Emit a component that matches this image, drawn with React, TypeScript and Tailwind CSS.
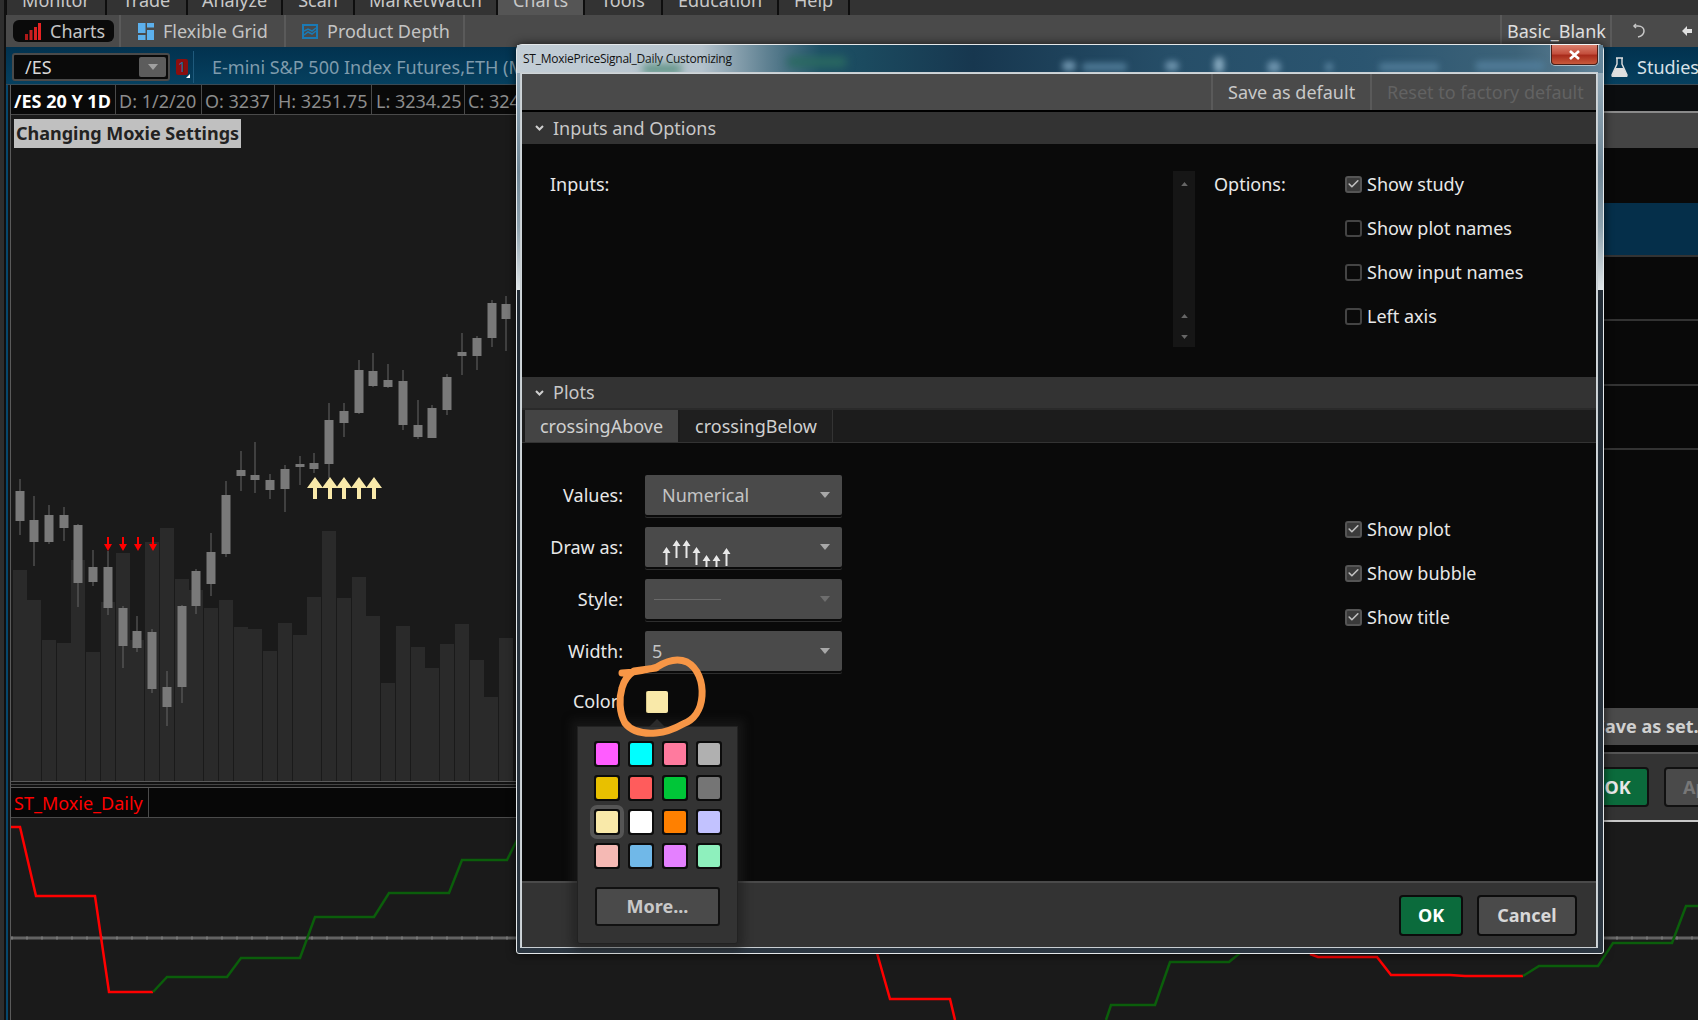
import { Check } from 'lucide-react';

const FONT = "font-['Noto_Sans',sans-serif]";

const topTabs = [
  { label: 'Monitor', cls: 'w-[98px]' },
  { label: 'Trade', cls: 'w-[79px]' },
  { label: 'Analyze', cls: 'w-[93px]' },
  { label: 'Scan', cls: 'w-[70px]' },
  { label: 'MarketWatch', cls: 'w-[141px]' },
  { label: 'Charts', cls: 'w-[85px] bg-[#555555]' },
  { label: 'Tools', cls: 'w-[76px]' },
  { label: 'Education', cls: 'w-[114px]' },
  { label: 'Help', cls: 'w-[69px]' },
];

const infoCells = [
  { label: '/ES 20 Y 1D', cls: 'w-[105px] pl-[3px] font-bold text-white' },
  { label: 'D: 1/2/20', cls: 'w-[86px] pl-[3px]' },
  { label: 'O: 3237', cls: 'w-[73px] pl-[3px]' },
  { label: 'H: 3251.75', cls: 'w-[97px] pl-[3px]' },
  { label: 'L: 3234.25', cls: 'w-[93px] pl-[4px]' },
  { label: 'C: 3248', cls: 'w-[80px] pl-[3px]' },
];

// x center, wick top, body top, body bottom, wick bottom
const candles = [
  [20, 479, 491, 521, 535], [34, 496, 520, 542, 566], [49, 505, 515, 542, 544], [64, 507, 515, 528, 541],
  [78, 524, 525, 583, 607], [93, 550, 567, 582, 586], [108, 551, 567, 608, 615], [123, 606, 608, 646, 668],
  [137, 616, 631, 648, 652], [152, 629, 632, 689, 693], [167, 671, 687, 707, 726], [182, 605, 606, 687, 703],
  [196, 569, 571, 606, 614], [211, 533, 552, 584, 596], [226, 481, 495, 554, 557], [241, 451, 470, 476, 491],
  [255, 442, 475, 480, 493], [270, 474, 480, 490, 499], [285, 465, 469, 489, 512], [300, 456, 464, 467, 485],
  [314, 453, 463, 469, 473], [329, 403, 420, 464, 478], [344, 403, 411, 423, 437], [359, 360, 370, 413, 414],
  [373, 353, 371, 386, 387], [388, 364, 380, 387, 388], [403, 370, 381, 425, 430], [418, 400, 425, 437, 439],
  [432, 405, 408, 438, 438], [447, 374, 377, 410, 415], [462, 333, 352, 356, 375], [477, 336, 338, 356, 370],
  [492, 300, 303, 338, 347], [506, 296, 304, 319, 351],
];

// left edge, top
const volumes = [
  [13, 570], [27, 600], [42, 640], [57, 643], [71, 560], [86, 652], [101, 602], [116, 553], [130, 640],
  [145, 542], [160, 528], [175, 579], [189, 590], [204, 608], [219, 600], [234, 627], [248, 629], [263, 651],
  [278, 623], [293, 635], [307, 597], [322, 531], [337, 598], [352, 577], [366, 616], [381, 683], [396, 626],
  [411, 647], [425, 668], [440, 644], [455, 624], [470, 660], [484, 697], [499, 638],
];

const swatches = [
  ['bg-[#ff5cff]', 'bg-[#00ffff]', 'bg-[#ff7a9e]', 'bg-[#b0b0b0]'],
  ['bg-[#e8c000]', 'bg-[#ff5c5c]', 'bg-[#00c638]', 'bg-[#757575]'],
  ['bg-[#f9e9a9]', 'bg-[#ffffff]', 'bg-[#ff8000]', 'bg-[#c2c2ff]'],
  ['bg-[#f5b9b4]', 'bg-[#70b8e8]', 'bg-[#e480ff]', 'bg-[#8ef0bd]'],
];

function Caret({ up = false, small = false, cls = 'fill-[#9a9a9a]' }: { up?: boolean; small?: boolean; cls?: string }) {
  return (
    <svg width={small ? 7 : 10} height={small ? 4 : 6} viewBox="0 0 10 6" className={cls}>
      <path d={up ? 'M0 6 L5 0 L10 6 Z' : 'M0 0 L10 0 L5 6 Z'} />
    </svg>
  );
}

function Chevron() {
  return (
    <svg width="9" height="6" viewBox="0 0 9 6" className="stroke-[#cfcfcf] fill-none" strokeWidth="2">
      <path d="M1 1 L4.5 4.5 L8 1" />
    </svg>
  );
}

function ChartPanel() {
  return (
    <div className="relative h-[666px] shrink-0 overflow-hidden">
      <div className="absolute left-[3px] top-[4px] h-[29px] px-[2px] flex items-center bg-[#c0c0c0] text-[#222222] font-bold text-[18px] whitespace-nowrap z-10">
        Changing Moxie Settings
      </div>
      <svg width="1687" height="666" viewBox="11 115 1687 666" className="block">
        {volumes.map(([x, top]) => (
          <rect key={x} x={x} y={top} width="14" height={781 - top} fill="#2a2a2a" />
        ))}
        {candles.map(([x, wt, bt, bb, wb]) => (
          <g key={x}>
            <rect x={x - 0.5} y={wt} width="1" height={wb - wt} fill="#666666" />
            <rect x={x - 4.5} y={bt} width="9" height={Math.max(bb - bt, 2)} fill="#797979" />
          </g>
        ))}
        {[108, 123, 138, 153].map((x) => (
          <path key={x} d={`M${x - 1} 537 h2 v7 h3 l-4 7 l-4 -7 h3 z`} fill="#ff0000" />
        ))}
        {[315, 330, 344, 359, 374].map((x) => (
          <path key={x} d={`M${x} 477 l8 11 h-6 v11 h-4 v-11 h-6 z`} fill="#f9e9a9" />
        ))}
      </svg>
    </div>
  );
}

function StudyPanel() {
  return (
    <div className="relative h-[202px] shrink-0 overflow-hidden">
      <svg width="1687" height="202" viewBox="11 818 1687 202" className="block">
        <line x1="11" y1="938" x2="1698" y2="938" stroke="#626262" strokeWidth="3" />
        <line x1="11" y1="938" x2="1698" y2="938" stroke="#757575" strokeWidth="3" strokeDasharray="2 13" />
        <polyline fill="none" stroke="#ff0000" strokeWidth="2.5" points="11,827 20,827 36,896 95,896 109,992 153,992" />
        <polyline fill="none" stroke="#0b5e0b" strokeWidth="2.5" points="153,992 167,977 227,977 241,958 300,958 315,917 374,917 389,893 449,893 462,860 507,860 517,840" />
        <polyline fill="none" stroke="#ff0000" strokeWidth="2.5" points="877,953 890,999 950,999 955,1020" />
        <polyline fill="none" stroke="#0b5e0b" strokeWidth="2.5" points="1106,1020 1111,1005 1155,1005 1170,962 1229,962 1240,953" />
        <polyline fill="none" stroke="#ff0000" strokeWidth="2.5" points="1310,954 1318,957 1377,957 1391,975 1450,975 1465,976 1523,976" />
        <polyline fill="none" stroke="#0b5e0b" strokeWidth="2.5" points="1523,976 1539,966 1598,966 1613,943 1672,943 1686,906 1698,906" />
      </svg>
    </div>
  );
}

function StudiesWindow() {
  return (
    <div className="absolute left-[1560px] top-[85px] w-[138px] h-[737px] flex flex-col bg-[#090909] text-[18px]">
      <div className="h-[26px] shrink-0 bg-[#0b0d0f]" />
      <div className="h-[2px] shrink-0 bg-[#8a8a8a]" />
      <div className="h-[35px] shrink-0 bg-[#444444]" />
      <div className="h-[55px] shrink-0" />
      <div className="h-[54px] shrink-0 bg-[#052f4a] border-b-2 border-[#333333]" />
      <div className="h-[64px] shrink-0 border-b-2 border-[#333333]" />
      <div className="h-[65px] shrink-0 border-b-2 border-[#333333]" />
      <div className="h-[64px] shrink-0 border-b-2 border-[#333333]" />
      <div className="h-[258px] shrink-0" />
      <div className="h-[37px] shrink-0 bg-[#4a4a4a] pl-[35px] flex items-center font-bold text-[#d0d0d0] whitespace-nowrap">
        Save as set...
      </div>
      <div className="h-[7px] shrink-0" />
      <div className="flex-1 bg-[#333333] border-t-2 border-[#555555] border-b-2 border-b-[#c8c8c8] flex items-center pl-[26px] gap-[15px]">
        <div className="w-[63px] h-[40px] shrink-0 bg-[#0b6b3c] border-2 border-[#111111] rounded-[4px] flex items-center justify-center font-bold text-[#e8e8e8]">OK</div>
        <div className="w-[60px] h-[40px] shrink-0 bg-[#4a4a4a] border-2 border-[#111111] rounded-[4px] pl-[17px] flex items-center font-bold text-[#777777] whitespace-nowrap overflow-hidden">Apply</div>
      </div>
    </div>
  );
}

function CheckRow({ label, checked = false }: { label: string; checked?: boolean }) {
  return (
    <div className="h-[24px] flex items-center gap-[5px] text-[18px] text-[#e8e8e8] whitespace-nowrap">
      <span className={`w-[17px] h-[17px] rounded-[3px] border-2 flex items-center justify-center ${checked ? 'border-[#555555] bg-[#3a3a3a]' : 'border-[#444444]'}`}>
        {checked && <Check size={14} strokeWidth={3} className="text-[#c0c0c0]" />}
      </span>
      {label}
    </div>
  );
}

function Select({ label, children, dim = false }: { label: string; children?: React.ReactNode; dim?: boolean }) {
  return (
    <div className="flex h-[40px] mb-[12px]">
      <div className="w-[101px] text-right text-[18px] text-[#e8e8e8] leading-[40px]">{label}</div>
      <div className="ml-[22px] w-[197px] h-[40px] bg-[#4a4a4a] rounded-[2px] flex items-center overflow-hidden pr-[12px] shadow-[0_2px_0_#0a0a0a,0_3px_0_#2e2e2e] text-[18px] text-[#c4c4c4]">
        <div className="flex-1 min-w-0 h-full flex items-center">{children}</div>
        <Caret cls={dim ? 'fill-[#6e6e6e]' : 'fill-[#a8a8a8]'} />
      </div>
    </div>
  );
}

function DrawAsArrows() {
  const tips = [20, 13, 13, 20, 28, 28, 21];
  return (
    <svg width="75" height="40" viewBox="0 0 75 40" className="ml-[15px] fill-[#e8e8e8]">
      {tips.map((t, i) => (
        <path key={i} d={`M${6.5 + i * 10} ${t} l4 6 h-3 v12 h-2 v-12 h-3 z`} />
      ))}
    </svg>
  );
}

function ColorPopup() {
  return (
    <div className="absolute left-[60px] top-[681px] w-[161px] h-[218px] bg-[#333333] border border-[#222222] rounded-b-[3px] shadow-[0_0_8px_6px_rgba(30,30,30,0.6)] pt-[14px] px-[16px]">
      <svg width="16" height="9" viewBox="0 0 16 9" className="absolute left-[71px] -top-[9px] fill-[#2a2a2a]">
        <path d="M0 9 L8 1 L16 9 Z" />
      </svg>
      <div className="grid grid-cols-4 gap-x-[8px] gap-y-[8px] w-[128px]">
        {swatches.flat().map((c, i) => (
          <div key={i} className={`w-[26px] h-[26px] rounded-[3px] flex items-center justify-center bg-[#0c0c0c] ${i === 8 ? 'outline-[4px] outline-[#555555]' : ''}`}>
            <div className={`w-[22px] h-[22px] rounded-[2px] ${c}`} />
          </div>
        ))}
      </div>
      <div className="mt-[18px] mx-auto w-[125px] h-[39px] bg-[#4a4a4a] border-2 border-[#111111] rounded-[3px] flex items-center justify-center text-[18px] font-bold text-[#c8c8c8]">
        More...
      </div>
    </div>
  );
}

function TitleBar() {
  return (
    <div className="relative h-[28px] shrink-0 overflow-hidden bg-[linear-gradient(to_right,#c3ced6_0%,#b4c2cc_17%,#5f8192_23%,#1e5166_28%,#1b4a5f_32%,#17374f_42%,#264e68_60%,#2b5570_78%,#3d6379_92%,#64859a_100%)]">
      <span className="absolute left-[6px] top-[5px] text-[12px] font-['Open_Sans',sans-serif] tracking-[-0.25px] text-[#111111] whitespace-nowrap">
        ST_MoxiePriceSignal_Daily Customizing
      </span>
      <span className="absolute left-[125px] top-[20px] w-[40px] h-[8px] rounded-full bg-[#4e8a78] blur-[4px]" />
      <span className="absolute left-[270px] top-[12px] w-[60px] h-[10px] rounded-full bg-[#2a6a60] blur-[4px]" />
      <span className="absolute left-[545px] top-[16px] w-[14px] h-[10px] rounded-full bg-[#6d93ad] blur-[3px]" />
      <span className="absolute left-[565px] top-[18px] w-[45px] h-[8px] rounded-full bg-[#4f7a96] blur-[3px]" />
      <span className="absolute left-[648px] top-[16px] w-[14px] h-[10px] rounded-full bg-[#6d93ad] blur-[3px]" />
      <span className="absolute left-[697px] top-[12px] w-[10px] h-[16px] rounded-full bg-[#88aac0] blur-[3px]" />
      <span className="absolute left-[750px] top-[16px] w-[14px] h-[12px] rounded-full bg-[#6d93ad] blur-[3px]" />
      <span className="absolute left-[808px] top-[18px] w-[8px] h-[8px] rounded-full bg-[#5c86a2] blur-[3px]" />
      <span className="absolute left-[862px] top-[18px] w-[60px] h-[8px] rounded-full bg-[#4f7a96] blur-[3px]" />
      <span className="absolute left-[958px] top-[16px] w-[70px] h-[10px] rounded-full bg-[#4f7a96] blur-[3px]" />
    </div>
  );
}

function CustomizeDialog() {
  return (
    <div className="absolute left-[516px] top-[44px] w-[1088px] h-[910px] rounded-t-[6px] rounded-b-[3px] border border-[#e4e8ea] bg-[linear-gradient(to_bottom,#9cb2c0_0%,#6e8595_14%,#8ca0ac_20%,#dfe5e8_27%,#222c36_27%,#2c3742_100%)] shadow-[0_0_10px_rgba(0,0,0,0.7)] text-[18px]">
      <TitleBar />
      {/* close button */}
      <div className="absolute right-[5px] top-0 w-[47px] h-[20px] rounded-b-[4px] border border-[#4a1e16] border-t-0 bg-[linear-gradient(to_bottom,#d9806e_0%,#c4503e_45%,#a92c1c_55%,#c85a3c_100%)] shadow-[0_0_0_1px_rgba(255,255,255,0.5)] flex items-center justify-center">
        <svg width="13" height="10" viewBox="0 0 13 10" className="stroke-white" strokeWidth="2.6">
          <path d="M2 1 L11 9 M11 1 L2 9" />
        </svg>
      </div>
      <div className="absolute left-[4px] top-[28px] w-[1076px] h-[874px] flex flex-col bg-[#0a0a0a] border-t border-x border-[#cfd6da] outline outline-1 outline-[#c8ced2]">
        <div className="h-[36px] shrink-0 flex justify-end bg-[#4a4a4a] text-[#c8c8c8]">
          <div className="w-[159px] border-l-2 border-[#5a5a5a] pl-[15px] leading-[37px] whitespace-nowrap">Save as default</div>
          <div className="w-[226px] border-l-2 border-[#5a5a5a] pl-[15px] leading-[37px] whitespace-nowrap text-[#626262]">Reset to factory default</div>
        </div>
        <div className="h-[2px] shrink-0 bg-black" />
        <div className="h-[32px] shrink-0 bg-[#333333] flex items-center pl-[13px] gap-[9px] text-[#c8c8c8]">
          <Chevron />
          Inputs and Options
        </div>
        <div className="h-[233px] shrink-0 flex pt-[27px] text-[#e8e8e8]">
          <div className="w-[651px] pl-[28px] h-[24px] leading-[26px]">Inputs:</div>
          <div className="w-[22px] h-[176px] bg-[#161616] flex flex-col items-center pt-[11px]">
            <Caret up small cls="fill-[#666666]" />
            <div className="flex-1" />
            <Caret up small cls="fill-[#666666]" />
            <div className="h-[17px]" />
            <Caret small cls="fill-[#666666]" />
            <div className="h-[8px]" />
          </div>
          <div className="w-[150px] pl-[19px] leading-[26px]">Options:</div>
          <div className="flex flex-col gap-[20px] pt-[1px]">
            <CheckRow label="Show study" checked />
            <CheckRow label="Show plot names" />
            <CheckRow label="Show input names" />
            <CheckRow label="Left axis" />
          </div>
        </div>
        <div className="h-[31px] shrink-0 bg-[#333333] flex items-center pl-[13px] gap-[9px] text-[#c8c8c8]">
          <Chevron />
          Plots
        </div>
        <div className="h-[2px] shrink-0 bg-[#2a2a2a]" />
        <div className="h-[33px] shrink-0 flex pl-[3px] gap-[2px] bg-[#1c1c1c] border-b border-[#333333] text-[#d0d0d0]">
          <div className="w-[153px] bg-[#444444] text-center leading-[32px]">crossingAbove</div>
          <div className="w-[153px] bg-[#1f1f1f] border-r border-[#333333] text-center leading-[32px]">crossingBelow</div>
        </div>
        <div className="flex-1 flex min-h-0">
          <div className="w-[823px] pt-[32px]">
            <Select label="Values:">
              <span className="ml-[17px]">Numerical</span>
            </Select>
            <Select label="Draw as:">
              <DrawAsArrows />
            </Select>
            <Select label="Style:" dim>
              <div className="ml-[9px] w-[67px] h-px bg-[#6a6a6a]" />
            </Select>
            <Select label="Width:">
              <span className="ml-[7px]">5</span>
            </Select>
            <div className="flex items-center h-[37px]">
              <div className="w-[101px] text-right text-[#e8e8e8]">Color:</div>
              <div className="ml-[23px] w-[22px] h-[22px] rounded-[2px] bg-[#f9e9a9] border-l border-[#d8c88a]" />
            </div>
          </div>
          <div className="pt-[74px] flex flex-col gap-[20px]">
            <CheckRow label="Show plot" checked />
            <CheckRow label="Show bubble" checked />
            <CheckRow label="Show title" checked />
          </div>
        </div>
        <div className="h-[66px] shrink-0 bg-[#333333] border-t-2 border-[#4a4a4a] flex justify-end items-center pr-[19px] gap-[14px] font-bold">
          <div className="w-[64px] h-[41px] bg-[#0b6b3c] border-2 border-[#0c0c0c] rounded-[4px] flex items-center justify-center text-white">OK</div>
          <div className="w-[100px] h-[41px] bg-[#4a4a4a] border-2 border-[#0c0c0c] rounded-[4px] flex items-center justify-center text-[#d8d8d8]">Cancel</div>
        </div>
      </div>
      <ColorPopup />
    </div>
  );
}

export default function App() {
  return (
    <div className={`relative flex w-[1698px] h-[1020px] overflow-hidden bg-[#1a1a1a] ${FONT}`}>
      <div className="w-[6px] shrink-0 bg-[#2e2e2e] border-r-2 border-[#101010]" />
      <div className="flex-1 min-w-0 flex flex-col">
        <div className="h-[15px] shrink-0 flex bg-[#0e0e0e] pl-[1px] gap-[2px] overflow-hidden text-[18px] text-[#c8c8c8]">
          {topTabs.map((t) => (
            <div key={t.label} className={`h-[15px] bg-[#333333] flex justify-center overflow-hidden ${t.cls}`}>
              <span className="-mt-[9px] leading-[18px]">{t.label}</span>
            </div>
          ))}
          <div className="flex-1 bg-[#333333]" />
        </div>
        <div className="h-[32px] shrink-0 flex items-center bg-[#4a4a4a] text-[18px] text-[#c4c4c4]">
          <div className="ml-[7px] w-[101px] h-[22px] rounded-[6px] bg-[#0a0a0a] flex items-center pl-[12px] gap-[9px]">
            <svg width="16" height="17" viewBox="0 0 16 17">
              <rect x="0" y="11" width="3" height="6" fill="#b01818" />
              <rect x="4.5" y="7" width="3" height="10" fill="#c81e1e" />
              <rect x="9" y="4" width="3" height="13" fill="#d82020" />
              <rect x="13" y="0" width="3" height="17" fill="#e82222" />
            </svg>
            Charts
          </div>
          <div className="ml-[5px] w-[165px] h-full border-l-2 border-[#5a5a5a] flex items-center pl-[17px] gap-[9px]">
            <svg width="16" height="17" viewBox="0 0 16 17" fill="#5cb0ec">
              <rect x="0" y="0" width="7.5" height="10" />
              <rect x="9" y="0" width="7" height="4.5" />
              <rect x="9" y="7" width="7" height="10" />
              <rect x="0" y="12" width="7.5" height="5" />
            </svg>
            Flexible Grid
          </div>
          <div className="w-[181px] h-full border-l-2 border-r-2 border-[#5a5a5a] flex items-center pl-[16px] gap-[9px]">
            <svg width="16" height="15" viewBox="0 0 16 15" fill="none" stroke="#1a7ab5" strokeWidth="2">
              <rect x="1" y="1" width="14" height="13" />
              <path d="M2 7 L6 5 L10 7 L14 4 M2 11 L6 8 L10 10 L14 7" strokeWidth="1.5" />
            </svg>
            Product Depth
          </div>
          <div className="ml-auto w-[112px] h-full border-x-2 border-[#5a5a5a] flex items-center pl-[5px] text-[#e0e0e0]">Basic_Blank</div>
          <div className="w-[86px] flex items-center pl-[20px]">
            <svg width="14" height="16" viewBox="0 0 14 16" fill="none" stroke="#c8c8c8" strokeWidth="1.5" className="mr-[36px]">
              <path d="M2 3 H6 C10 3 12 5.5 12 8 C12 10.5 10 13 6 14" />
              <path d="M4 1 L2 3 L4 5" />
            </svg>
            <svg width="10" height="10" viewBox="0 0 10 10" fill="#e0e0e0">
              <path d="M0 5 L5 0 L5 3 L10 3 L10 7 L5 7 L5 10 Z" />
            </svg>
          </div>
        </div>
        <div className="h-[38px] shrink-0 flex items-center pt-[3px] bg-[linear-gradient(to_bottom,#02324f,#06405f)] border-b border-[#3a4a55] text-[18px]">
          <div className="ml-[6px] w-[158px] h-[28px] rounded-[3px] bg-[#0a0a0a] border-2 border-[#4a4a4a] flex items-center justify-between pl-[11px] pr-[2px] text-[#d8d8d8]">
            /ES
            <div className="w-[27px] h-[20px] rounded-[2px] bg-[#5c5c5c] flex items-center justify-center">
              <Caret cls="fill-[#a0a0a0]" />
            </div>
          </div>
          <div className="relative ml-[6px] w-[12px] h-[16px] rounded-[2px] bg-[#8b0e0e] text-[#1e6f9e] text-[14px] leading-[16px] text-center">
            1
            <span className="absolute -right-[2px] -bottom-[3px] w-0 h-0 border-l-[4px] border-l-transparent border-b-[4px] border-b-white" />
          </div>
          <div className="ml-[5px] w-px h-[32px] bg-[#1f5a7c]" />
          <div className="ml-[18px] text-[#7f9bac] whitespace-nowrap">E-mini S&amp;P 500 Index Futures,ETH (Mar 20)</div>
          <div className="ml-auto flex items-center w-[87px] gap-[9px] text-[#d8e2e8] whitespace-nowrap overflow-hidden">
            <svg width="17" height="20" viewBox="0 0 17 20" className="shrink-0">
              <path d="M5 1 H12 M6 1 V7 L1 18 Q1 20 3 20 H14 Q16 20 16 18 L11 7 V1" fill="none" stroke="#e0e0e0" strokeWidth="1.4" />
              <path d="M4.5 11 H12.5 L16 18 Q16 20 14 20 H3 Q1 20 1 18 Z" fill="#e0e0e0" />
            </svg>
            Studies
          </div>
        </div>
        <div className="flex-1 min-h-0 flex">
          <div className="w-[2px] shrink-0 bg-[#07476c]" />
          <div className="w-[2px] shrink-0 bg-[#141414]" />
          <div className="flex-1 min-w-0 flex flex-col border-l border-[#5a5a5a]">
            <div className="h-[30px] shrink-0 flex items-center bg-[#090909] border-b border-[#4a4a4a] text-[18px] text-[#8c8c8c]">
              {infoCells.map((c) => (
                <div key={c.label} className={`h-full border-r border-[#4a4a4a] leading-[32px] whitespace-nowrap overflow-hidden ${c.cls}`}>
                  {c.label}
                </div>
              ))}
            </div>
            <ChartPanel />
            <div className="h-[7px] shrink-0 bg-[#121212] border-t border-[#5a5a5a] border-b border-b-[#5a5a5a] relative">
              <div className="absolute inset-x-0 top-[2px] h-px bg-[#444444]" />
            </div>
            <div className="h-[30px] shrink-0 flex bg-[#070707] border-b border-[#4a4a4a] text-[18px] text-[#ff0000]">
              <div className="w-[138px] pl-[3px] border-r border-[#4a4a4a] leading-[30px] whitespace-nowrap">ST_Moxie_Daily</div>
            </div>
            <StudyPanel />
          </div>
        </div>
      </div>
      <StudiesWindow />
      <CustomizeDialog />
      {/* hand drawn circle around the color swatch */}
      <svg width="105" height="95" viewBox="0 0 105 95" fill="none" stroke="#f79646" strokeWidth="7" strokeLinecap="round" strokeLinejoin="round" className="absolute left-[610px] top-[650px]">
        <path d="M12 23 C26 22 38 20 47 17 C58 10 68 8 77 12 C88 18 93 32 92 46 C91 60 84 70 73 74 C66 78 58 82 46 83 C34 84 22 82 15 73 C9 62 9 48 12 38 C14 30 18 25 24 21 L46 18" />
      </svg>
    </div>
  );
}
